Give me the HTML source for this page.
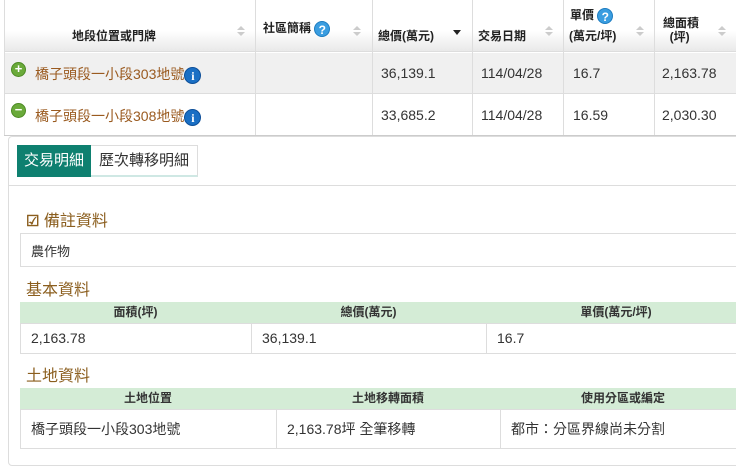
<!DOCTYPE html>
<html><head><meta charset="utf-8"><style>
*{box-sizing:border-box;margin:0;padding:0}
body{width:736px;height:442px;overflow:hidden;background:#fff;font-family:"Liberation Sans","Noto Sans CJK TC",sans-serif;color:#333;position:relative}
.a{position:absolute}
.hdr{left:4px;top:0;width:740px;height:52px;background:linear-gradient(#fff,#fff 60%,#e9e9e9);border-bottom:1px solid #ddd}
.vl{position:absolute;width:1px;background:#ddd}
.hl{position:absolute;height:1px;background:#ddd}
.ht{position:absolute;font-size:12px;font-weight:bold;color:#222;line-height:14px}
.sort{position:absolute;width:0;height:0;border-left:4px solid transparent;border-right:4px solid transparent}
.q{display:inline-block;width:16px;height:16px;border-radius:50%;background:#3a9de0;color:#fff;font-size:12px;line-height:16px;text-align:center;font-weight:bold;border:1px solid #1d7cc0;vertical-align:middle}
.td{position:absolute;font-size:14px;color:#333}
.link{color:#9a5a1f}
.ico{display:inline-block;width:17px;height:17px;border-radius:50%;background:#1a6fc4;color:#fff;font-size:12px;font-weight:bold;font-family:"Liberation Serif",serif;text-align:center;line-height:17px;vertical-align:middle;border:1px solid #0d4f99}
.pm{position:absolute;width:15px;height:15px;border-radius:50%;background:#6aaa3a;border:1px solid #4d8a24;color:#fff;font-size:13px;line-height:12px;text-align:center;font-weight:bold}
.sec{position:absolute;font-size:16px;color:#8b5e1e}
.gh{position:absolute;background:#d4ecd6;font-size:12px;font-weight:bold;color:#333;text-align:center;line-height:21px;height:21px}
.cell{position:absolute;font-size:14px;border:1px solid #ddd;line-height:28px;padding-left:10px}
</style></head><body>
<div class="a hdr"></div>
<div class="vl" style="left:4px;top:0;height:135px"></div>
<div class="vl" style="left:255px;top:0;height:135px"></div>
<div class="vl" style="left:372px;top:0;height:135px"></div>
<div class="vl" style="left:472px;top:0;height:135px"></div>
<div class="vl" style="left:563px;top:0;height:135px"></div>
<div class="vl" style="left:654px;top:0;height:135px"></div>
<div class="ht" style="left:72px;top:29px">地段位置或門牌</div>
<div class="ht" style="left:263px;top:21px">社區簡稱 <span class="q">?</span></div>
<div class="ht" style="left:378px;top:29px">總價(萬元)</div>
<div class="ht" style="left:478px;top:29px">交易日期</div>
<div class="ht" style="left:570px;top:8px">單價 <span class="q">?</span></div>
<div class="ht" style="left:569px;top:29px">(萬元/坪)</div>
<div class="ht" style="left:663px;top:16px">總面積<br>&nbsp;&nbsp;(坪)</div>
<div class="sort" style="left:237px;top:26px;border-bottom:4px solid #ccc"></div><div class="sort" style="left:237px;top:32px;border-top:4px solid #ccc"></div>
<div class="sort" style="left:353px;top:26px;border-bottom:4px solid #ccc"></div><div class="sort" style="left:353px;top:32px;border-top:4px solid #ccc"></div>
<div class="sort" style="left:453px;top:30px;border-top:5px solid #222"></div>
<div class="sort" style="left:545px;top:26px;border-bottom:4px solid #ccc"></div><div class="sort" style="left:545px;top:32px;border-top:4px solid #ccc"></div>
<div class="sort" style="left:636px;top:26px;border-bottom:4px solid #ccc"></div><div class="sort" style="left:636px;top:32px;border-top:4px solid #ccc"></div>
<div class="sort" style="left:718px;top:26px;border-bottom:4px solid #ccc"></div><div class="sort" style="left:718px;top:32px;border-top:4px solid #ccc"></div>
<div class="a" style="left:5px;top:53px;width:731px;height:40px;background:#f0f0f0"></div>
<div class="hl" style="left:4px;top:93px;width:732px"></div>
<div class="hl" style="left:4px;top:135px;width:732px;background:#ccc"></div>
<div class="vl" style="left:255px;top:53px;height:82px"></div><div class="vl" style="left:372px;top:53px;height:82px"></div><div class="vl" style="left:472px;top:53px;height:82px"></div><div class="vl" style="left:563px;top:53px;height:82px"></div><div class="vl" style="left:654px;top:53px;height:82px"></div>
<div class="pm" style="left:11px;top:62px">+</div>
<div class="pm" style="left:11px;top:103px">−</div>
<div class="td link" style="left:35px;top:64px">橋子頭段一小段303地號<span class="ico">i</span></div>
<div class="td link" style="left:35px;top:106px">橋子頭段一小段308地號<span class="ico">i</span></div>
<div class="td" style="left:381px;top:65px">36,139.1</div><div class="td" style="left:481px;top:65px">114/04/28</div><div class="td" style="left:573px;top:65px">16.7</div><div class="td" style="left:662px;top:65px">2,163.78</div>
<div class="td" style="left:381px;top:107px">33,685.2</div><div class="td" style="left:481px;top:107px">114/04/28</div><div class="td" style="left:573px;top:107px">16.59</div><div class="td" style="left:662px;top:107px">2,030.30</div>
<div class="a" style="left:8px;top:136px;width:740px;height:330px;border:1px solid #ddd;border-radius:4px;background:#fff"></div>
<div class="a" style="left:17px;top:145px;width:74px;height:32px;background:#0e8070;color:#fff;font-size:15px;line-height:32px;text-align:center">交易明細</div>
<div class="a" style="left:91px;top:145px;width:107px;height:32px;border:1px solid #ddd;border-left:0;border-bottom:2px solid #cfe8e4;font-size:15px;line-height:30px;text-align:center;color:#333">歷次轉移明細</div>
<div class="hl" style="left:9px;top:185px;width:727px"></div>
<div class="sec" style="left:26px;top:207px"><span style="font-size:15px;font-weight:bold;color:#8b5e1e">☑</span> 備註資料</div>
<div class="cell" style="left:20px;top:233px;width:720px;height:34px;line-height:36px;font-size:13px">農作物</div>
<div class="sec" style="left:26px;top:276px">基本資料</div>
<div class="gh" style="left:20px;top:302px;width:231px">面積(坪)</div><div class="gh" style="left:251px;top:302px;width:235px">總價(萬元)</div><div class="gh" style="left:486px;top:302px;width:260px">單價(萬元/坪)</div>
<div class="cell" style="left:20px;top:323px;width:232px;height:31px">2,163.78</div><div class="cell" style="left:251px;top:323px;width:236px;height:31px">36,139.1</div><div class="cell" style="left:486px;top:323px;width:260px;height:31px">16.7</div>
<div class="sec" style="left:26px;top:362px">土地資料</div>
<div class="gh" style="left:20px;top:388px;width:256px">土地位置</div><div class="gh" style="left:276px;top:388px;width:224px">土地移轉面積</div><div class="gh" style="left:500px;top:388px;width:246px">使用分區或編定</div>
<div class="cell" style="left:20px;top:409px;width:257px;height:40px;line-height:38px">橋子頭段一小段303地號</div><div class="cell" style="left:276px;top:409px;width:225px;height:40px;line-height:38px">2,163.78坪 全筆移轉</div><div class="cell" style="left:500px;top:409px;width:246px;height:40px;line-height:38px">都市：分區界線尚未分割</div>
</body></html>
